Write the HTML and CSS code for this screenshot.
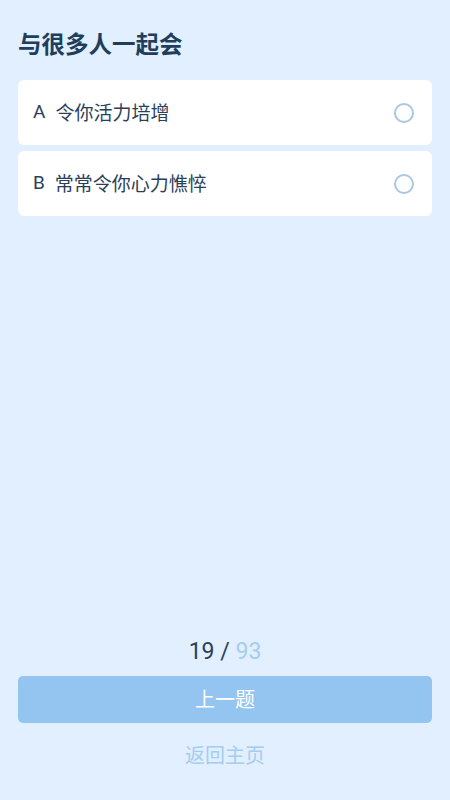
FILE: index.html
```html
<!DOCTYPE html>
<html lang="zh">
<head>
    <meta charset="UTF-8">
    <meta name="viewport" content="width=device-width, initial-scale=1.0">
    <title>测试</title>
    <link rel="stylesheet" href="styles.css">
</head>
<body>
    <div class="page">
        <h1 class="question">与很多人一起会</h1>

        <div class="options">
            <div class="option">
                <span class="option-label">A</span>
                <span class="option-text">令你活力培增</span>
                <span class="radio"></span>
            </div>
            <div class="option">
                <span class="option-label">B</span>
                <span class="option-text">常常令你心力憔悴</span>
                <span class="radio"></span>
            </div>
        </div>

        <div class="footer">
            <div class="progress"><span class="current">19 /</span> <span class="total">93</span></div>
            <button class="prev-btn">上一题</button>
            <div class="home-link">返回主页</div>
        </div>
    </div>
</body>
</html>
```

FILE: styles.css
```css
html, body {
    margin: 0;
    padding: 0;
    background: #e1efff;
    font-family: 'Noto Sans CJK SC', 'Noto Sans', sans-serif;
}

.page {
    box-sizing: border-box;
    min-height: 100vh;
    padding: 0 18px;
    display: flex;
    flex-direction: column;
}

.question {
    margin: 0;
    padding-top: 26px;
    font-size: 23.5px;
    line-height: 34px;
    font-weight: bold;
    color: #1f3e5c;
}

.options {
    margin-top: 20px;
    display: flex;
    flex-direction: column;
    gap: 6px;
}

.option {
    box-sizing: border-box;
    height: 65px;
    background: #fff;
    border-radius: 6px;
    display: flex;
    align-items: center;
    padding: 0 18px 3px 15px;
    font-size: 19px;
    color: #2a4058;
}

.option-label {
    margin-right: 10px;
    font-family: 'Roboto', 'Noto Sans', sans-serif;
}

.option-text {
    flex: 1;
}

.radio {
    width: 16px;
    height: 16px;
    margin-top: 3px;
    border: 2px solid #aac7e1;
    border-radius: 50%;
}

.footer {
    margin-top: auto;
    padding-bottom: 29px;
    display: flex;
    flex-direction: column;
    align-items: center;
}

.progress {
    font-family: 'Roboto', 'Noto Sans', sans-serif;
    font-size: 23px;
    line-height: 30px;
    color: #2a4058;
}

.progress .total {
    color: #a6cdef;
}

.prev-btn {
    margin-top: 9px;
    width: 100%;
    height: 47px;
    border: none;
    border-radius: 5px;
    background: #94c5f0;
    color: #fff;
    font-family: 'Noto Sans CJK SC', sans-serif;
    font-size: 20px;
    padding: 0 0 3px;
}

.home-link {
    margin-top: 16px;
    font-size: 20px;
    line-height: 32px;
    color: #a6cdef;
}
```
